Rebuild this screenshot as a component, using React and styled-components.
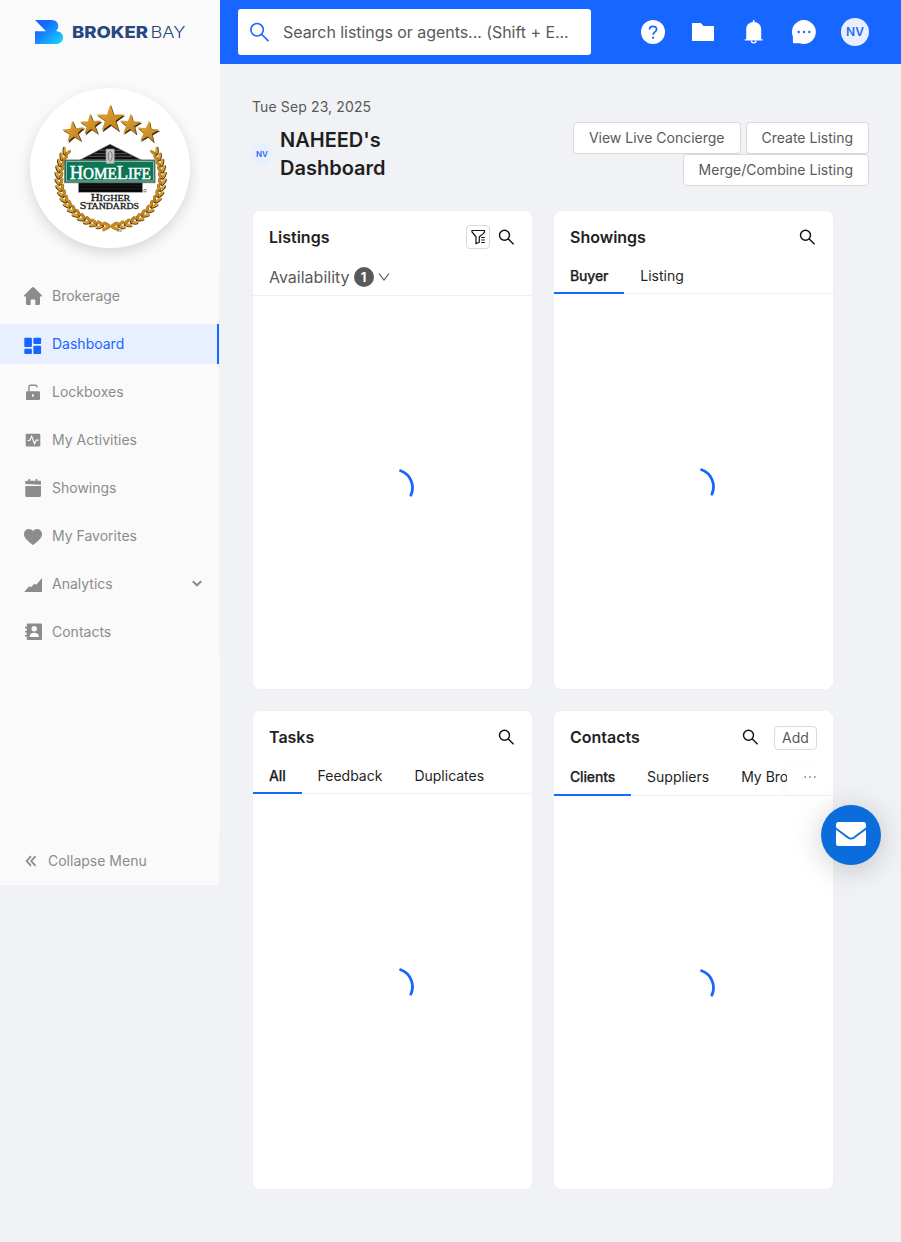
import React from 'react';
import styled, { createGlobalStyle } from 'styled-components';

const Global = createGlobalStyle`
  * { box-sizing: border-box; }
  body { margin: 0; background: #f0f2f6; font-family: Inter, "Liberation Sans", sans-serif; font-size: 14px; line-height: 20px; color: #1f1f1f; }
  button { font: inherit; margin: 0; }
  svg { display: block; flex: none; }
`;

const Page = styled.div`
  display: flex;
  align-items: flex-start;
  width: 901px;
  height: 1242px;
  overflow: hidden;
`;

const Sidebar = styled.aside`
  width: 220px;
  height: 885px;
  background: #fafafa;
  display: flex;
  flex-direction: column;
  flex: none;
`;

const Brand = styled.div`
  height: 64px;
  padding: 20px 0 0 35px;
`;

const BrokerageLogo = styled.div`
  width: 160px;
  height: 160px;
  margin: 24px auto 0 30px;
  border-radius: 50%;
  background: #fff;
  box-shadow: 0 5px 14px rgba(0, 0, 0, 0.14);
`;

const Menu = styled.nav`
  margin-top: 24px;
  padding: 4px 0;
  width: 220px;
  border-right: 1px solid #f0f0f0;
  display: flex;
  flex-direction: column;
  gap: 8px;
`;

const MenuItem = styled.a`
  height: 40px;
  padding: 0 17px 0 23px;
  display: flex;
  align-items: center;
  gap: 9px;
  color: ${p => (p.$active ? '#1666ff' : '#8c8c8c')};
  background: ${p => (p.$active ? '#e8efff' : 'transparent')};
  border-right: ${p => (p.$active ? '2px solid #1666ff' : '0')};
  span { flex: 1; }
`;

const Collapse = styled.div`
  margin-top: auto;
  height: 48px;
  padding: 0 0 0 25px;
  border-right: 1px solid #f0f0f0;
  display: flex;
  align-items: center;
  gap: 11px;
  color: #8c8c8c;
`;

const Main = styled.div`
  flex: 1;
  min-width: 0;
`;

const TopBar = styled.header`
  height: 64px;
  background: #1666ff;
  display: flex;
  align-items: center;
  justify-content: space-between;
  padding: 0 32px 0 18px;
`;

const SearchBox = styled.div`
  width: 353px;
  height: 46px;
  background: #fff;
  border-radius: 3px;
  display: flex;
  align-items: center;
  gap: 14px;
  padding: 0 12px 0 11px;
  font-size: 16px;
  letter-spacing: -0.05px;
  color: #595959;
`;

const TopIcons = styled.div`
  display: flex;
  align-items: center;
  gap: 26.3px;
`;

const Avatar = styled.span`
  display: flex;
  flex: none;
  align-items: center;
  justify-content: center;
  width: ${p => (p.$small ? '20px' : '28px')};
  height: ${p => (p.$small ? '24px' : '28px')};
  margin-left: ${p => (p.$small ? '0' : '-1px')};
  border-radius: 50%;
  background: #e8efff;
  color: #2d69f0;
  font-weight: 600;
  font-size: ${p => (p.$small ? '8px' : '12px')};
`;

const PageHead = styled.section`
  padding: 32px 32px 0;
`;

const DateLine = styled.div`
  height: 22px;
  line-height: 22px;
  letter-spacing: 0.12px;
  color: #595959;
`;

const HeadRow = styled.div`
  display: flex;
  justify-content: space-between;
  align-items: flex-start;
  height: 68px;
  margin-top: 4px;
`;

const TitleGroup = styled.div`
  display: flex;
  align-items: center;
  gap: 8px;
  width: 180px;
  margin-top: 4px;
`;

const Title = styled.h1`
  margin: 0;
  font-size: 20px;
  line-height: 28px;
  font-weight: 600;
`;

const Actions = styled.div`
  display: flex;
  flex-wrap: wrap;
  justify-content: flex-end;
  column-gap: 5px;
  width: 320px;
`;

const Button = styled.button`
  height: ${p => (p.$small ? '24px' : '32px')};
  padding: ${p => (p.$small ? '0 7px' : '0 15px')};
  border: 1px solid #d9d9d9;
  border-radius: 4px;
  background: #fff;
  color: #595959;
  display: flex;
  align-items: center;
  justify-content: center;
  white-space: nowrap;
`;

const AddButton = styled(Button)`
  width: 43px;
  margin-top: 2px;
`;

const IconButton = styled(Button)`
  width: 24px;
  padding: 0;
`;

const Grid = styled.section`
  display: grid;
  grid-template-columns: 281px 281px;
  gap: 20px;
  padding: 20px 0 0 32px;
`;

const CardBox = styled.article`
  height: 480px;
  background: #fff;
  border: 1px solid #f0f0f0;
  border-radius: 8px;
  display: flex;
  flex-direction: column;
  overflow: hidden;
`;

const CardHead = styled.div`
  height: 52px;
  flex: none;
  padding: 0 ${p => (p.$wide ? '16px' : '18px')} 0 16px;
  display: flex;
  align-items: center;
  gap: ${p => (p.$wide ? '16px' : '8px')};
  h2 { flex: 1; margin: 0; font-size: 16px; line-height: 24px; font-weight: 600; }
`;

const FilterBar = styled.div`
  height: 33px;
  flex: none;
  padding: 0 16px 5px;
  display: flex;
  align-items: center;
  gap: 4px;
  font-size: 16px;
  color: #595959;
  border-bottom: 1px solid #f0f0f0;
`;

const Count = styled.span`
  width: 20px;
  height: 20px;
  border-radius: 50%;
  background: #595959;
  color: #fff;
  font-size: 13px;
  font-weight: 700;
  text-align: center;
`;

const TabBar = styled.div`
  display: flex;
  flex: none;
  height: ${p => p.$height}px;
  padding-top: ${p => (p.$height > 31 ? 1 : 0)}px;
  border-bottom: 1px solid #f0f0f0;
`;

const TabList = styled.div`
  display: flex;
  flex: 1;
  min-width: 0;
  overflow: hidden;
  margin-bottom: -1px;
`;

const Tab = styled.span`
  flex: none;
  padding: 3px 16px 0;
  line-height: 20px;
  font-weight: ${p => (p.$active ? 500 : 400)};
  -webkit-text-stroke: ${p => (p.$active ? '0.25px #1f1f1f' : '0')};
  letter-spacing: ${p => (p.$active ? '-0.15px' : '0')};
  border-bottom: 2px solid ${p => (p.$active ? '#1666ff' : 'transparent')};
`;

const More = styled.span`
  width: 46px;
  flex: none;
  display: flex;
  align-items: center;
  justify-content: center;
  padding-bottom: 5px;
  box-shadow: -5px 0 8px -5px rgba(0, 0, 0, 0.08);
`;

const Body = styled.div`
  flex: 1;
  display: flex;
  align-items: center;
  justify-content: center;
  padding: 0 0 12px 2px;
`;

const MailBubble = styled.button`
  position: fixed;
  left: 821px;
  top: 805px;
  width: 60px;
  height: 60px;
  border: 0;
  border-radius: 50%;
  background: #0a6ddb;
  display: flex;
  align-items: center;
  justify-content: center;
  padding: 0 0 3px;
  box-shadow: 0 4px 30px rgba(0, 0, 0, 0.2);
`;

const BrandMark = () => (
  <svg width="152" height="26" viewBox="0 0 152 26">
    <defs>
      <linearGradient id="mark" x1="0" y1="0" x2="1" y2="1">
        <stop offset="0.25" stopColor="#1666ff" />
        <stop offset="1" stopColor="#14dcff" />
      </linearGradient>
    </defs>
    <path d="M0 0H16.5C21 0 23.3 2.8 23.3 6C23.3 8.3 22.4 9.8 21 11C25.2 11.3 28 14 28 17.4C28 21.3 25 24 21 24H0V11.2H11Z" fill="url(#mark)" />
    <g fill="#27477f" fontFamily="Inter, sans-serif" fontSize="16.5">
      <text x="37" y="18" fontWeight="800" textLength="76" lengthAdjust="spacingAndGlyphs">BROKER</text>
      <text x="115.5" y="18" fontWeight="300" textLength="35" lengthAdjust="spacingAndGlyphs">BAY</text>
    </g>
  </svg>
);

const starPoints = (cx, cy, r) =>
  Array.from({ length: 10 }, (_, i) => {
    const a = -Math.PI / 2 + (i * Math.PI) / 5;
    const q = i % 2 ? r * 0.38 : r;
    return `${(cx + q * Math.cos(a)).toFixed(1)},${(cy + q * Math.sin(a)).toFixed(1)}`;
  }).join(' ');

const STARS = [[160, 156, 35, -6], [212, 134, 34, -3], [271, 117, 44, 0], [331, 134, 34, 3], [384, 156, 35, 6]];

const LEAVES = Array.from({ length: 17 }, (_, i) => {
  const a = ((-30 + i * 7.2) * Math.PI) / 180;
  return { x: 154 * Math.cos(a), y: 290 + 148 * Math.sin(a), t: (a * 180) / Math.PI };
});

const LaurelHalf = () => (
  <g>
    {LEAVES.map((l, i) => (
      <g key={i} transform={`translate(${l.x} ${l.y}) rotate(${l.t})`}>
        <ellipse cx="7" cy="1" rx="4.5" ry="13" transform="rotate(30 7 1)" fill="#4e3408" />
        <ellipse cx="5.5" cy="-1" rx="4" ry="12" transform="rotate(30 5.5 -1)" fill="#dca032" />
        <ellipse cx="-5" cy="1" rx="4.5" ry="12" transform="rotate(-24 -5 1)" fill="#5c3e0c" />
        <ellipse cx="-6" cy="-1" rx="3.7" ry="11" transform="rotate(-24 -6 -1)" fill="#c98a1e" />
      </g>
    ))}
  </g>
);

const HomeLifeSeal = () => (
  <svg width="160" height="160" viewBox="30 24 480 480">
    <defs>
      <linearGradient id="gold" x1="0" y1="0" x2="1" y2="1">
        <stop offset="0" stopColor="#e8ae3a" />
        <stop offset="1" stopColor="#b87818" />
      </linearGradient>
    </defs>
    {STARS.map(([x, y, r, t]) => (
      <g key={x} transform={`rotate(${t} ${x} ${y})`}>
        <polygon points={starPoints(x + 3, y + 4, r)} fill="#3d2c14" />
        <polygon points={starPoints(x, y, r)} fill="url(#gold)" />
      </g>
    ))}
    <g transform="translate(272 0)"><LaurelHalf /></g>
    <g transform="translate(272 0) scale(-1 1)"><LaurelHalf /></g>
    <path d="M243 431Q272 434 296 453M300 431Q272 434 249 453" stroke="#c98a1e" strokeWidth="6" fill="none" />
    <path d="M178 241L270 193L366 241Z" fill="#111" stroke="#777" strokeWidth="2" />
    <path d="M222 221H320M206 229H336M240 211H302" stroke="#999" strokeWidth="1.5" />
    <rect x="175" y="306" width="193" height="31" fill="#0b0b0b" stroke="#aaa" strokeWidth="2" />
    <path d="M176 317H367M176 326H367" stroke="#444" strokeWidth="1" />
    <rect x="134" y="240" width="271" height="68" fill="#0b7556" stroke="#777" strokeWidth="3" />
    <rect x="139" y="245" width="261" height="58" fill="none" stroke="#c6d8d0" strokeWidth="2" />
    <rect x="258" y="207" width="25" height="44" rx="2" fill="#c8c8c8" stroke="#888" strokeWidth="2" />
    <ellipse cx="270.5" cy="228" rx="6" ry="14" fill="none" stroke="#777" strokeWidth="3" />
    <g fontFamily="'Liberation Serif', serif">
      <text x="149" y="296" fontSize="59" fill="#fff" stroke="#fff" strokeWidth="1.6" textLength="243" lengthAdjust="spacingAndGlyphs">H<tspan fontSize="48">OME</tspan>L<tspan fontSize="48">IFE</tspan></text>
      <text x="212" y="362" fontSize="32" fill="#222" stroke="#222" strokeWidth="1" textLength="119" lengthAdjust="spacingAndGlyphs">H<tspan fontSize="26">IGHER</tspan></text>
      <text x="179" y="387" fontSize="32" fill="#222" stroke="#222" strokeWidth="1" textLength="178" lengthAdjust="spacingAndGlyphs">S<tspan fontSize="26">TANDARDS</tspan></text>
    </g>
    <circle cx="375" cy="332" r="4" fill="none" stroke="#555" strokeWidth="2" />
    <text x="292" y="455" fontSize="9" fill="#444" fontFamily="Inter, sans-serif">TM</text>
  </svg>
);

const GLYPHS = {
  home: <path d="M10 .9c.4 0 .8.2 1.1.5l7.5 7.5c.8.8.4 1.6-.6 1.6h-1v6.9c0 1-.6 1.6-1.6 1.6h-3.1v-4.6c0-.6-.4-1-1-1H8.7c-.6 0-1 .4-1 1V19H4.6c-1 0-1.6-.6-1.6-1.6v-6.9H2c-1 0-1.4-.8-.6-1.6l7.5-7.5c.3-.3.7-.5 1.1-.5Z" />,
  dashboard: (
    <>
      <rect x="1.3" y="3.8" width="7.6" height="9.2" rx="1" />
      <rect x="10.4" y="3.8" width="7.7" height="6.2" rx="1" />
      <rect x="1.3" y="14.7" width="7.6" height="5.3" rx="1" />
      <rect x="10.4" y="11.8" width="7.7" height="8.2" rx="1" />
    </>
  ),
  lock: (
    <>
      <path fillRule="evenodd" d="M4 9.3h12a1 1 0 0 1 1 1V17a1 1 0 0 1-1 1H4a1 1 0 0 1-1-1v-6.7a1 1 0 0 1 1-1Zm5.1 2.9v2.5h1.7v-2.5Z" />
      <path d="M6 9.5V4.7C6 3.8 6.6 3.2 7.5 3.2h5c.9 0 1.5.6 1.5 1.5V5.5" fill="none" stroke="currentColor" strokeWidth="1.4" />
    </>
  ),
  activity: (
    <>
      <rect x="2.7" y="3.7" width="14.6" height="12.8" rx="1.3" />
      <path d="M4.5 10.5H6.6L8.7 6.3L11.5 13.7L13.2 10.2H15.7" fill="none" stroke="#fafafa" strokeWidth="1.2" />
    </>
  ),
  calendar: <path d="M5.5 1h1.7v1.7h5.4V1h1.7v1.7H17a1 1 0 0 1 1 1v3.1L2.3 5.9V3.7a1 1 0 0 1 1-1h2.2ZM2.3 7.9H18v9.7a1.3 1.3 0 0 1-1.3 1.3H3.600a1.300 1.300 0 0 1-1.300-1.300Z" />,
  heart: <path d="M10 19C4 14.3 1 11.8 1 8.2C1 5.2 3.2 3 5.9 3C7.6 3 9.1 3.8 10 5.1C10.9 3.8 12.4 3 14.1 3C16.8 3 19 5.2 19 8.2C19 11.8 16 14.3 10 19Z" />,
  chart: <path d="M1.3 18L6 12.2L8 13.2L11 10L13.5 10.6L19 4V18Z" />,
  contacts: (
    <>
      <path d="M4.7 1.4H18a1 1 0 0 1 1 1V17a1 1 0 0 1-1 1H4.7a1 1 0 0 1-1-1V2.4a1 1 0 0 1 1-1Z" />
      <path d="M2 5.5H5M2 9.7H5M2 13.8H5" stroke="currentColor" strokeWidth="1.5" />
      <circle cx="11.2" cy="6.7" r="2.7" fill="#fafafa" />
      <path d="M6.5 14.9C6.5 12 8.5 10.8 11.2 10.8S16 12 16 14.9Z" fill="#fafafa" />
    </>
  ),
};

const MenuIcon = ({ name }) => <svg width="20" height="20" viewBox="0 0 20 20" fill="currentColor">{GLYPHS[name]}</svg>;

const SearchIcon = ({ size = 16, color = '#111', weight = 1.45 }) => (
  <svg width={size} height={size} viewBox="-0.3 0 16 16" fill="none" stroke={color} strokeWidth={weight}>
    <circle cx="6.2" cy="6.2" r="5" />
    <path d="M9.8 9.8L15.3 15.3" />
  </svg>
);

const FilterIcon = () => (
  <svg width="16" height="16" viewBox="-0.5 0 16 16" fill="none" stroke="#111" strokeWidth="1.2">
    <path d="M12.8 4.6L14 3V1.5H1.5V3L5.5 7.8V14.6L8.8 13.2V7.8L12.8 4.6" />
    <path d="M10.8 8.5H14.3M10.8 11H14.3M10.8 13.5H14.3" />
  </svg>
);

const Spinner = () => (
  <svg width="40" height="40" viewBox="0 0 40 40" fill="none" stroke="#1666ff" strokeWidth="2.8" strokeLinecap="round">
    <path d="M26.6 3.8A18 18 0 0 1 36.9 28.1" />
  </svg>
);

const MENU = [
  ['home', 'Brokerage'], ['dashboard', 'Dashboard'], ['lock', 'Lockboxes'], ['activity', 'My Activities'],
  ['calendar', 'Showings'], ['heart', 'My Favorites'], ['chart', 'Analytics'], ['contacts', 'Contacts'],
];

const Tabs = ({ items, height = 31, more }) => (
  <TabBar $height={height}>
    <TabList>
      {items.map((t, i) => <Tab key={t} $active={i === 0}>{t}</Tab>)}
    </TabList>
    {more && (
      <More>
        <svg width="12" height="4" viewBox="0 0 12 4" fill="#8c8c8c"><circle cx="1.2" cy="2" r=".9" /><circle cx="6" cy="2" r=".9" /><circle cx="10.8" cy="2" r=".9" /></svg>
      </More>
    )}
  </TabBar>
);

export default function App() {
  return (
    <>
      <Global />
      <Page>
        <Sidebar>
          <Brand><BrandMark /></Brand>
          <BrokerageLogo><HomeLifeSeal /></BrokerageLogo>
          <Menu>
            {MENU.map(([icon, label]) => (
              <MenuItem key={label} $active={label === 'Dashboard'}>
                <MenuIcon name={icon} />
                <span>{label}</span>
                {label === 'Analytics' && (
                  <svg width="10" height="8" viewBox="0 0 10 8" fill="none" stroke="currentColor" strokeWidth="2"><path d="M.8 1.2L5 5.3L9.2 1.2" /></svg>
                )}
              </MenuItem>
            ))}
          </Menu>
          <Collapse>
            <svg width="12" height="12" viewBox="0 0 12 12" fill="none" stroke="currentColor" strokeWidth="1.8"><path d="M6 1.2L1.7 6L6 10.8M10.5 1.2L6.2 6L10.5 10.8" /></svg>
            Collapse Menu
          </Collapse>
        </Sidebar>
        <Main>
          <TopBar>
            <SearchBox>
              <SearchIcon size={20} color="#1666ff" weight={1.3} />
              Search listings or agents... (Shift + E...
            </SearchBox>
            <TopIcons>
              <svg width="24" height="24" viewBox="0 0 24 24">
                <circle cx="12" cy="12" r="12" fill="#fff" />
                <path d="M8.5 9.5C8.5 7.5 10 6.4 12 6.4S15.6 7.6 15.6 9.4C15.6 11.7 12.1 12 12.1 14.7" fill="none" stroke="#1666ff" strokeWidth="1.7" />
                <rect x="11.1" y="16.7" width="2" height="2" fill="#1666ff" />
              </svg>
              <svg width="24" height="24" viewBox="0 0 24 24" fill="#fff"><path d="M1 3.7A.7.7 0 0 1 1.7 3H9.7L12.6 6H22.3A.7.7 0 0 1 23 6.7V20.3A.7.7 0 0 1 22.3 21H1.7A.7.7 0 0 1 1 20.3Z" /></svg>
              <svg width="24" height="24" viewBox="-0.7 0 24 24" fill="#fff">
                <path d="M11.2 2V.8A.8.8 0 0 1 12.8.8V2C16.7 2.4 19.5 5.3 19.5 9.3V19.2H21V20.6H3V19.2H4.5V9.3C4.5 5.3 7.3 2.4 11.2 2Z" />
                <path d="M9.6 20.5a2.4 2.4 0 0 0 4.8 0" fill="none" stroke="#fff" strokeWidth="1.3" />
              </svg>
              <svg width="24" height="24" viewBox="0 0 24 24">
                <path d="M12 0A12 12 0 1 1 7.5 23.2H1.8A1 1 0 0 1 .9 22.3V16.7A12 12 0 0 1 12 0Z" fill="#fff" />
                <g fill="#1666ff"><circle cx="6.7" cy="12" r="1.2" /><circle cx="12" cy="12" r="1.2" /><circle cx="17.3" cy="12" r="1.2" /></g>
              </svg>
              <Avatar>NV</Avatar>
            </TopIcons>
          </TopBar>
          <PageHead>
            <DateLine>Tue Sep 23, 2025</DateLine>
            <HeadRow>
              <TitleGroup>
                <Avatar $small>NV</Avatar>
                <Title>NAHEED's Dashboard</Title>
              </TitleGroup>
              <Actions>
                <Button>View Live Concierge</Button>
                <Button>Create Listing</Button>
                <Button>Merge/Combine Listing</Button>
              </Actions>
            </HeadRow>
          </PageHead>
          <Grid>
            <CardBox>
              <CardHead>
                <h2>Listings</h2>
                <IconButton $small><FilterIcon /></IconButton>
                <SearchIcon />
              </CardHead>
              <FilterBar>
                Availability <Count>1</Count>
                <svg width="12" height="10" viewBox="0 0 12 10" fill="none" stroke="#595959" strokeWidth="1.1"><path d="M1 1.5L6 8L11 1.5" /></svg>
              </FilterBar>
              <Body><Spinner /></Body>
            </CardBox>
            <CardBox>
              <CardHead><h2>Showings</h2><SearchIcon /></CardHead>
              <Tabs items={['Buyer', 'Listing']} />
              <Body><Spinner /></Body>
            </CardBox>
            <CardBox>
              <CardHead><h2>Tasks</h2><SearchIcon /></CardHead>
              <Tabs items={['All', 'Feedback', 'Duplicates']} />
              <Body><Spinner /></Body>
            </CardBox>
            <CardBox>
              <CardHead $wide><h2>Contacts</h2><SearchIcon /><AddButton $small>Add</AddButton></CardHead>
              <Tabs items={['Clients', 'Suppliers', 'My Brokerage']} height={33} more />
              <Body><Spinner /></Body>
            </CardBox>
          </Grid>
        </Main>
        <MailBubble>
          <svg width="30" height="24" viewBox="0 0 30 24" fill="#fff">
            <path d="M2.5 0H27.5A2.5 2.5 0 0 1 30 2.5V5.5L17.5 14.8Q15 16.5 12.5 14.8L0 5.5V2.5A2.5 2.5 0 0 1 2.5 0Z" />
            <path d="M0 7.8L11.7 16.5Q15 18.7 18.3 16.5L30 7.8V21.5A2.5 2.5 0 0 1 27.5 24H2.5A2.5 2.5 0 0 1 0 21.5Z" />
          </svg>
        </MailBubble>
      </Page>
    </>
  );
}
